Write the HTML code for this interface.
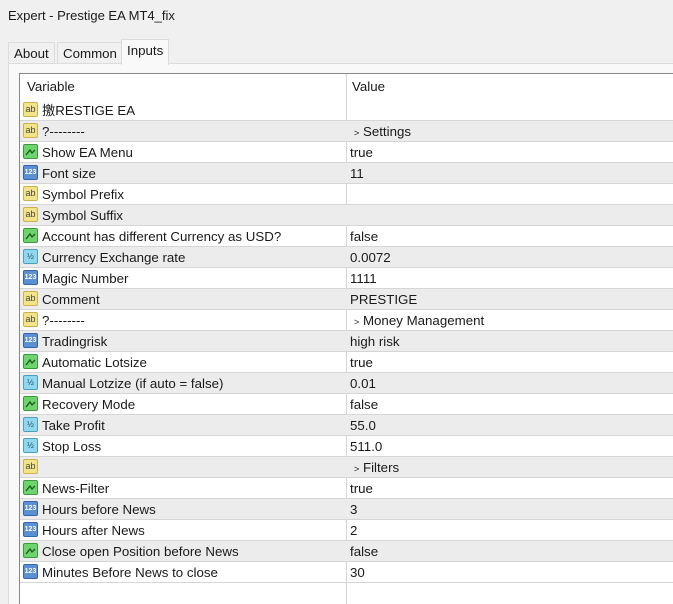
<!DOCTYPE html><html><head><style>
body{margin:0;width:673px;height:591px;background:#f0f0f0;font-family:"Liberation Sans","Noto Sans CJK SC",sans-serif;font-size:13.3px;color:#1a1a1a;position:relative;overflow:hidden}
.title{position:absolute;left:8px;top:8px;font-size:13px}
.tab{position:absolute;top:42px;height:21px;background:#f0f0f0;border:1px solid #dcdcdc;border-bottom:none;line-height:21px;padding:0 5px}
.panel{position:absolute;left:8px;top:63px;width:680px;height:540px;background:#f9f9f9;border-top:1px solid #dcdcdc;border-left:1px solid #dcdcdc}
.list{position:absolute;left:19px;top:73px;width:660px;height:530px;background:#fff;border-top:1px solid #888;border-left:1px solid #888}
.hdr{position:absolute;top:0;height:25px;line-height:26px;left:0;width:660px}
.row{position:absolute;left:0;width:660px;height:20px;border-bottom:1px solid #d6d6d6;line-height:21px}
.g{background:#ececec}
.c1{position:absolute;left:22px}
.c2{position:absolute;left:330px}
.div{position:absolute;left:326px;top:0;width:1px;height:530px;background:#d6d6d6}
.ic{position:absolute;left:3px;top:2px;width:15px;height:15px;border-radius:2px;font-size:8px;line-height:15px;text-align:center;font-weight:bold}
.ab{background:#f3e48a;border:1px solid #c9b24a;width:13px;height:13px;line-height:13px;color:#444;font-size:9px;font-weight:normal}
.gr{background:#6ed46e;border:1px solid #3a9a3a;width:13px;height:13px}
.bl{background:#5b8fd6;border:1px solid #3565a8;width:13px;height:13px;color:#fff;font-size:7px;line-height:13px}
.cy{background:#8fd8ee;border:1px solid #4aa0c0;width:13px;height:13px;color:#246;font-size:8px;line-height:13px;font-weight:normal}
</style></head><body>
<div class="title">Expert - Prestige EA MT4_fix</div>
<div class="tab" style="left:8px">About</div>
<div class="tab" style="left:57px">Common</div>
<div class="tab" style="left:121px;top:39px;height:25px;background:#f9f9f9;z-index:2">Inputs</div>
<div class="panel"></div>
<div class="list">
<div class="hdr"><span style="position:absolute;left:7px">Variable</span><span class="c2" style="left:332px">Value</span></div>
<div class="div"></div>
<div id="rows"></div>
</div>
<script>
var d=[["ab","撽RESTIGE EA",""],["ab","?--------","  &gt; Settings"],["gr","Show EA Menu","true"],["bl","Font size","11"],["ab","Symbol Prefix",""],["ab","Symbol Suffix",""],["gr","Account has different Currency as USD?","false"],["cy","Currency Exchange rate","0.0072"],["bl","Magic Number","1111"],["ab","Comment","PRESTIGE"],["ab","?--------","  &gt; Money Management"],["bl","Tradingrisk","high risk"],["gr","Automatic Lotsize","true"],["cy","Manual Lotzize (if auto = false)","0.01"],["gr","Recovery Mode","false"],["cy","Take Profit","55.0"],["cy","Stop Loss","511.0"],["ab","","  &gt; Filters"],["gr","News-Filter","true"],["bl","Hours before News","3"],["bl","Hours after News","2"],["gr","Close open Position before News","false"],["bl","Minutes Before News to close","30"]];
var h="";
d.forEach(function(r,i){var t=r[0],ic=t=="ab"?"ab":t=="bl"?"123":t=="cy"?"½":'<svg width="13" height="13"><path d="M2 10 L6 5 L8 8 L11 5" stroke="#1a5a1a" stroke-width="1.3" fill="none"/></svg>';
var g=r[2].indexOf("&gt;")>=0;
h+='<div class="row'+(i%2?' g':'')+'" style="top:'+(26+i*21)+'px"><div class="ic '+t+'">'+ic+'</div><span class="c1">'+r[1]+'</span><span class="c2" style="'+(g?'left:334px':'')+'">'+(g?'<span style="font-size:9px">&gt;</span> '+r[2].replace("  &gt; ",""):r[2])+'</span></div>';});
document.getElementById("rows").innerHTML=h;
</script>
</body></html>
